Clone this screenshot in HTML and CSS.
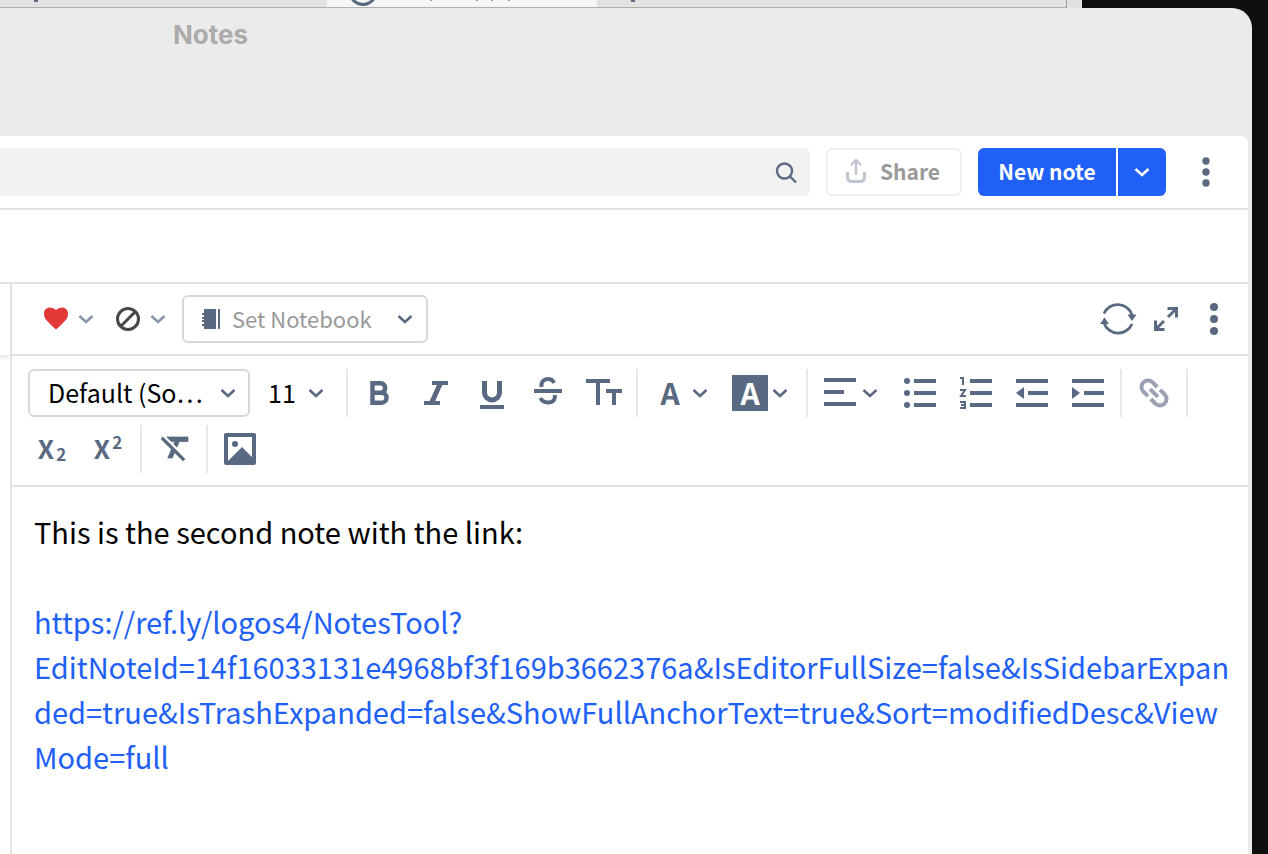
FILE: index.html
```html
<!DOCTYPE html>
<html lang="en">
<head>
    <meta charset="utf-8">
    <title>Notes</title>
    <link rel="stylesheet" href="styles.css">
</head>
<body>
    <!-- shared shapes -->
    <svg class="defs" aria-hidden="true">
        <symbol id="chevron" viewBox="0 0 16 16"><path d="M1.500 5L8 11l6.500-6" fill="none" stroke="currentColor" stroke-width="2.600"/></symbol>
        <symbol id="dots" viewBox="0 0 48 48"><circle cx="24" cy="12" r="4"/><circle cx="24" cy="24" r="4"/><circle cx="24" cy="36" r="4"/></symbol>
    </svg>

    <!-- window behind -->
    <div class="back-window">
        <div class="back-tab first"><i class="mark"></i></div>
        <div class="back-tab active">
            <svg width="180" height="8" viewBox="0 0 180 8"><circle cx="16" cy="-8.500" r="13" fill="none" stroke="#5a6982" stroke-width="3"/><path d="M83 0h2v1h-2zM129 0h2v1h-2zM144 0h2v1h-2zM161 0h2v1h-2z" fill="#999"/></svg>
        </div>
        <div class="back-tab rest"><i class="mark"></i></div>
        <div class="back-end"></div>
    </div>

    <div class="window">
        <div class="titlebar">Notes</div>
        <main class="panel">
            <header class="header">
                <label class="search">
                    <input type="search" aria-label="Search notes">
                    <svg width="24" height="24" viewBox="0 0 24 24" fill="none" stroke="currentColor" stroke-width="2.400"><circle cx="10.500" cy="11" r="7.500"/><path d="M16 16.500l6 6"/></svg>
                </label>
                <button class="share" disabled>
                    <svg width="20" height="24" viewBox="0 0 20 24" fill="none" stroke="#bfc5d0"><path d="M1.500 13v5q0 4.500 4.500 4.500h8q4.500 0 4.500-4.500v-5" stroke-width="3"/><path d="M10 16V2M5 6l5-5 5 5" stroke-width="2.400"/></svg>
                    Share
                </button>
                <div class="new-note">
                    <button class="new-main">New note</button>
                    <button class="new-more" aria-label="More note types"><svg width="16" height="16"><use href="#chevron"/></svg></button>
                </div>
                <button class="icon-btn" aria-label="Menu"><svg width="44" height="44"><use href="#dots"/></svg></button>
            </header>
            <div class="filters"></div>

            <div class="columns">
                <aside class="list"><div class="list-head"></div></aside>
                <section class="note">
                    <div class="note-bar">
                        <button class="split-btn pale" aria-label="Highlight style">
                            <svg width="36" height="36" viewBox="0 0 36 36"><path d="M18 28.500Q16 27 12 23C8 19 6 17 6 12.500C6 9 8.500 6.500 12 6.500Q15.500 6.500 18 9Q20.500 6.500 24 6.500C27.500 6.500 30 9 30 12.500C30 17 28 19 24 23Q20 27 18 28.500Z" fill="#e23838"/></svg>
                            <svg width="16" height="16"><use href="#chevron"/></svg>
                        </button>
                        <button class="split-btn pale" aria-label="Icon">
                            <svg width="36" height="36" viewBox="0 0 36 36" fill="none" stroke="#4a4646" stroke-width="3"><circle cx="18" cy="18" r="10.500"/><path d="M10.500 25.500l15-15"/></svg>
                            <svg width="16" height="16"><use href="#chevron"/></svg>
                        </button>
                        <label class="drop notebook">
                            <svg width="20" height="20" viewBox="0 0 20 20"><path d="M2 0h12v20H2zM16 0h1q1 0 1 1v18q0 1-1 1h-1zM0 4h2v2H0zM0 8h2v2H0zM0 11h2v2H0zM0 15h2v2H0z"/></svg>
                            <select aria-label="Notebook"><option>Set Notebook</option></select>
                            <svg width="16" height="16"><use href="#chevron"/></svg>
                        </label>
                        <div class="note-actions">
                            <button class="icon-btn" aria-label="Sync">
                                <svg width="48" height="48" viewBox="0 0 48 48"><path d="M10 18.500A15 15 0 0 1 38 20M38 29A15 15 0 0 1 10 28" fill="none" stroke="currentColor" stroke-width="2.800"/><path d="M33.500 19.500h9l-4.500 6.500zM6 29h9l-4.500-6.500z"/></svg>
                            </button>
                            <button class="icon-btn" aria-label="Full size">
                                <svg width="48" height="48" viewBox="0 0 48 48" fill="none" stroke="currentColor" stroke-width="3"><path d="M25.500 13.500h9v9M34 14l-8 8M22.500 34.500h-9v-9M14 34l8-8"/></svg>
                            </button>
                            <button class="icon-btn" aria-label="Note menu"><svg width="48" height="48"><use href="#dots"/></svg></button>
                        </div>
                    </div>

                    <div class="toolbar">
                        <label class="drop font">
                            <select aria-label="Font"><option>Default (So…</option></select>
                            <svg width="16" height="16"><use href="#chevron"/></svg>
                        </label>
                        <label class="drop size">
                            <select aria-label="Size"><option>11</option></select>
                            <svg width="16" height="16"><use href="#chevron"/></svg>
                        </label>
                        <span class="sep"></span>
                        <button class="icon-btn" aria-label="Bold">
                            <svg width="48" height="48" viewBox="0 0 48 48" fill="none" stroke="currentColor" stroke-width="4.500"><path d="M16.500 14.250h8a4.700 4.700 0 0 1 0 9.400h-8M24.500 23.650h1a5 5 0 0 1 0 10.100h-9M16.500 12v24"/></svg>
                        </button>
                        <button class="icon-btn" aria-label="Italic">
                            <svg width="48" height="48" viewBox="0 0 48 48" fill="none" stroke="currentColor" stroke-width="4"><path d="M20 14h16M12 34h16"/><path d="M28.500 14l-9 20" stroke-width="5"/></svg>
                        </button>
                        <button class="icon-btn" aria-label="Underline">
                            <svg width="48" height="48" viewBox="0 0 48 48" fill="none" stroke="currentColor" stroke-width="4"><path d="M16.500 12v11.500a7.500 7.500 0 0 0 15 0V12" stroke-width="5"/><path d="M12 38h24"/></svg>
                        </button>
                        <button class="icon-btn" aria-label="Strikethrough">
                            <svg width="48" height="48" viewBox="0 0 48 48" fill="none" stroke="currentColor" stroke-width="4"><path d="M10 22h28"/><path d="M17.500 18q-.5-4.500 2-6.500 1.800-1.500 4.500-1.500 4.500 0 6 4M16.500 29q2 4.500 7.500 4.500 7.500 0 6.800-7.500"/></svg>
                        </button>
                        <button class="icon-btn" aria-label="Text size">
                            <svg width="48" height="48" viewBox="0 0 48 48" fill="none" stroke="currentColor" stroke-width="4"><path d="M6 12h24M18 12v24M26 22h16M34 22v14"/></svg>
                        </button>
                        <span class="sep"></span>
                        <button class="split-btn" aria-label="Text color"><span class="letter">A</span><svg width="16" height="16"><use href="#chevron"/></svg></button>
                        <button class="split-btn" aria-label="Background color"><span class="letter filled">A</span><svg width="16" height="16"><use href="#chevron"/></svg></button>
                        <span class="sep"></span>
                        <button class="split-btn" aria-label="Align">
                            <svg width="36" height="36" viewBox="0 0 36 36"><path d="M2 3h32v4H2zM2 15h20v4H2zM2 27h32v4H2z"/></svg>
                            <svg width="16" height="16"><use href="#chevron"/></svg>
                        </button>
                        <button class="icon-btn" aria-label="Bulleted list">
                            <svg width="48" height="48" viewBox="0 0 48 48"><path d="M18 10h22v4H18zM18 22h22v4H18zM18 34h22v4H18z"/><circle cx="11" cy="12" r="3"/><circle cx="11" cy="24" r="3"/><circle cx="11" cy="36" r="3"/></svg>
                        </button>
                        <button class="icon-btn" aria-label="Numbered list">
                            <svg width="48" height="48" viewBox="0 0 48 48"><path d="M18 10h22v4H18zM18 22h22v4H18zM18 34h22v4H18z"/><path d="M8 9h3v7M8 21h5l-4 6h5M8 33h5v6H8M9 36h4" fill="none" stroke="currentColor" stroke-width="2"/></svg>
                        </button>
                        <button class="icon-btn" aria-label="Decrease indent">
                            <svg width="48" height="48" viewBox="0 0 48 48"><path d="M8 10h32v4H8zM20 22h20v4H20zM8 34h32v4H8zM16 18v12l-8-6z"/></svg>
                        </button>
                        <button class="icon-btn" aria-label="Increase indent">
                            <svg width="48" height="48" viewBox="0 0 48 48"><path d="M8 10h32v4H8zM20 22h20v4H20zM8 34h32v4H8zM8 18v12l8-6z"/></svg>
                        </button>
                        <span class="sep"></span>
                        <button class="icon-btn faded" aria-label="Insert link">
                            <svg width="48" height="48" viewBox="0 0 48 48" fill="none" stroke="currentColor" stroke-width="4"><g transform="rotate(45 24 24)"><path d="M22 17.500h-6.500a6.500 6.500 0 0 0 0 13H22M26 17.500h6.500a6.500 6.500 0 0 1 0 13H26M18.500 24h11"/></g></svg>
                        </button>
                        <span class="sep"></span>
                        <button class="icon-btn script" aria-label="Subscript">X<sub>2</sub></button>
                        <button class="icon-btn script" aria-label="Superscript">X<sup>2</sup></button>
                        <span class="sep"></span>
                        <button class="icon-btn" aria-label="Clear formatting">
                            <svg width="48" height="48" viewBox="0 0 48 48" stroke="currentColor"><path stroke-width=".5" transform="translate(8 4.500) scale(1.500)" d="M3.270 5L2 6.270l6.970 6.970L6.500 19h3l1.570-3.660L16.730 21 18 19.730 3.550 5.270zM6 5v.18L8.820 8h2.400l-.72 1.680 2.100 2.100L14.210 8H20V5z"/></svg>
                        </button>
                        <span class="sep"></span>
                        <button class="icon-btn" aria-label="Insert image">
                            <svg width="48" height="48" viewBox="0 0 48 48"><path fill-rule="evenodd" d="M10 8h28q2 0 2 2v28q0 2-2 2H10q-2 0-2-2V10q0-2 2-2zM12 12v24l14-14 10 10V12z"/><circle cx="19" cy="19" r="3"/></svg>
                        </button>
                    </div>

                    <div class="content" contenteditable="true" spellcheck="false">
                        <p>This is the second note with the link:</p>
                        <p><br></p>
                        <p><a href="https://ref.ly/logos4/NotesTool?EditNoteId=14f16033131e4968bf3f169b3662376a&amp;IsEditorFullSize=false&amp;IsSidebarExpanded=true&amp;IsTrashExpanded=false&amp;ShowFullAnchorText=true&amp;Sort=modifiedDesc&amp;ViewMode=full">https://ref.ly/logos4/NotesTool?EditNoteId=14f16033131e4968bf3f169b3662376a&amp;IsEditorFullSize=false&amp;IsSidebarExpanded=true&amp;IsTrashExpanded=false&amp;ShowFullAnchorText=true&amp;Sort=modifiedDesc&amp;ViewMode=full</a></p>
                    </div>
                </section>
            </div>
        </main>
    </div>
</body>
</html>
```

FILE: styles.css
```css
* {
    box-sizing: border-box;
}
body {
    margin: 0;
    height: 100vh;
    overflow: hidden;
    display: flex;
    flex-direction: column;
    background: #0e0e0e;
    color: #000;
    font-family: "Noto Sans CJK SC", "Noto Sans", sans-serif;
}
button, input, select {
    margin: 0;
    padding: 0;
    border: 0;
    background: none;
    color: inherit;
    font: inherit;
}
svg {
    display: block;
    flex: none;
    fill: currentColor;
}
svg[fill="none"] {
    fill: none;
}
.defs {
    position: absolute;
    width: 0;
    height: 0;
}

/* window behind */
.back-window {
    display: flex;
    height: 8px;
    margin-right: 186px;
    background: #e2e2e2;
    overflow: hidden;
}
.back-tab {
    border-bottom: 1px solid #b0b0b0;
}
.back-tab.first {
    width: 327px;
    padding-left: 34px;
}
.back-tab.active {
    width: 270px;
    padding-left: 20px;
    background: #f6f6f6;
}
.back-tab.rest {
    flex: 1;
    padding-left: 34px;
}
.back-end {
    width: 16px;
    border-left: 1px solid #a0a0a0;
}
.mark {
    display: block;
    width: 4px;
    height: 2px;
    background: #5a6982;
}

/* notes window */
.window {
    flex: 1;
    display: flex;
    flex-direction: column;
    min-height: 0;
    margin-right: 16px;
    padding-right: 4px;
    border-radius: 0 20px 0 0;
    background: #ebebeb;
}
.titlebar {
    height: 128px;
    padding: 10px 0 0 173px;
    color: #ababab;
    font: bold 26px/34px Inter, sans-serif;
}
.panel {
    flex: 1;
    display: flex;
    flex-direction: column;
    min-height: 0;
    border-radius: 0 8px 0 0;
    background: #fff;
    color: #5a6982;
}
.header {
    display: flex;
    align-items: center;
    gap: 16px;
    padding: 12px 18px 12px 0;
    border-bottom: 2px solid #e2e2e2;
}
.search {
    flex: 1;
    display: flex;
    align-items: center;
    height: 48px;
    padding-right: 12px;
    border-radius: 0 6px 6px 0;
    background: #f1f1f1;
}
.search input {
    flex: 1;
    min-width: 0;
    outline: none;
}
.share {
    display: flex;
    align-items: center;
    gap: 14px;
    width: 136px;
    height: 48px;
    padding: 0 0 2px 18px;
    border: 2px solid #efefef;
    border-radius: 6px;
    color: #999;
    font-size: 21px;
    font-weight: bold;
}
.new-note {
    display: flex;
    gap: 2px;
    height: 48px;
    color: #fff;
    font-size: 21px;
    font-weight: bold;
}
.new-main {
    width: 138px;
    padding-bottom: 2px;
    border-radius: 6px 0 0 6px;
    background: #2060f6;
}
.new-more {
    display: flex;
    align-items: center;
    justify-content: center;
    width: 48px;
    border-radius: 0 6px 6px 0;
    background: #2060f6;
}
.filters {
    height: 74px;
    flex: none;
    border-bottom: 2px solid #e2e2e2;
}

/* list and note */
.columns {
    flex: 1;
    display: flex;
    min-height: 0;
}
.list {
    width: 12px;
    border-right: 2px solid #e2e2e2;
}
.list-head {
    height: 71px;
    box-shadow: 0 2px 4px #ddd;
}
.note {
    flex: 1;
    min-width: 0;
}
.note-bar {
    display: flex;
    align-items: center;
    height: 72px;
    padding: 0 10px 0 20px;
    border-bottom: 2px solid #e2e2e2;
}
.note-actions {
    display: flex;
    margin-left: auto;
}
.icon-btn {
    display: flex;
    align-items: center;
    justify-content: center;
    width: 48px;
    height: 48px;
}
.split-btn {
    display: flex;
    align-items: center;
    gap: 4px;
    width: 72px;
    height: 48px;
    padding-left: 6px;
}
.pale {
    color: #8795ad;
}
.faded {
    color: #98a2b3;
}

/* drop-downs */
.drop {
    display: grid;
    align-items: center;
    height: 48px;
    border-radius: 6px;
}
.drop select {
    grid-area: 1 / 1;
    width: 100%;
    height: 100%;
    padding-bottom: 2px;
    appearance: none;
    outline: none;
}
.drop svg {
    grid-area: 1 / 1;
    pointer-events: none;
}
.drop svg:last-child {
    justify-self: end;
}
.notebook {
    width: 246px;
    margin-left: 6px;
    padding: 0 13px 0 18px;
    border: 2px solid #d8d8d8;
}
.notebook select {
    padding-left: 30px;
    color: #999;
    font-size: 22px;
}
.font {
    width: 222px;
    padding: 0 12px 0 18px;
    border: 2px solid #d8d8d8;
}
.size {
    width: 80px;
    padding: 0 14px 0 10px;
}
.font select, .size select {
    color: #000;
    font-size: 25px;
}

/* toolbar */
.toolbar {
    display: flex;
    flex-wrap: wrap;
    gap: 8px;
    padding: 13px 16px 12px;
    border-bottom: 2px solid #e2e2e2;
}
.sep {
    width: 2px;
    height: 48px;
    background: #e8e8e8;
}
.letter {
    width: 36px;
    height: 36px;
    font-size: 30px;
    font-weight: bold;
    line-height: 34px;
    text-align: center;
}
.filled {
    background: #5a6982;
    color: #fff;
}
.script {
    gap: 2px;
    padding-bottom: 3px;
    font-size: 26px;
    font-weight: bold;
}
.script sub, .script sup {
    font-size: 17px;
    line-height: 16px;
}
.script sub {
    padding-top: 12px;
}
.script sup {
    padding-bottom: 12px;
}

/* note text */
.content {
    padding: 22px 16px 22px 22px;
    color: #000;
    font-size: 29px;
    line-height: 45px;
    overflow-wrap: anywhere;
    outline: none;
}
.content p {
    margin: 0;
}
.content a {
    color: #2060f6;
    text-decoration: none;
}
```
